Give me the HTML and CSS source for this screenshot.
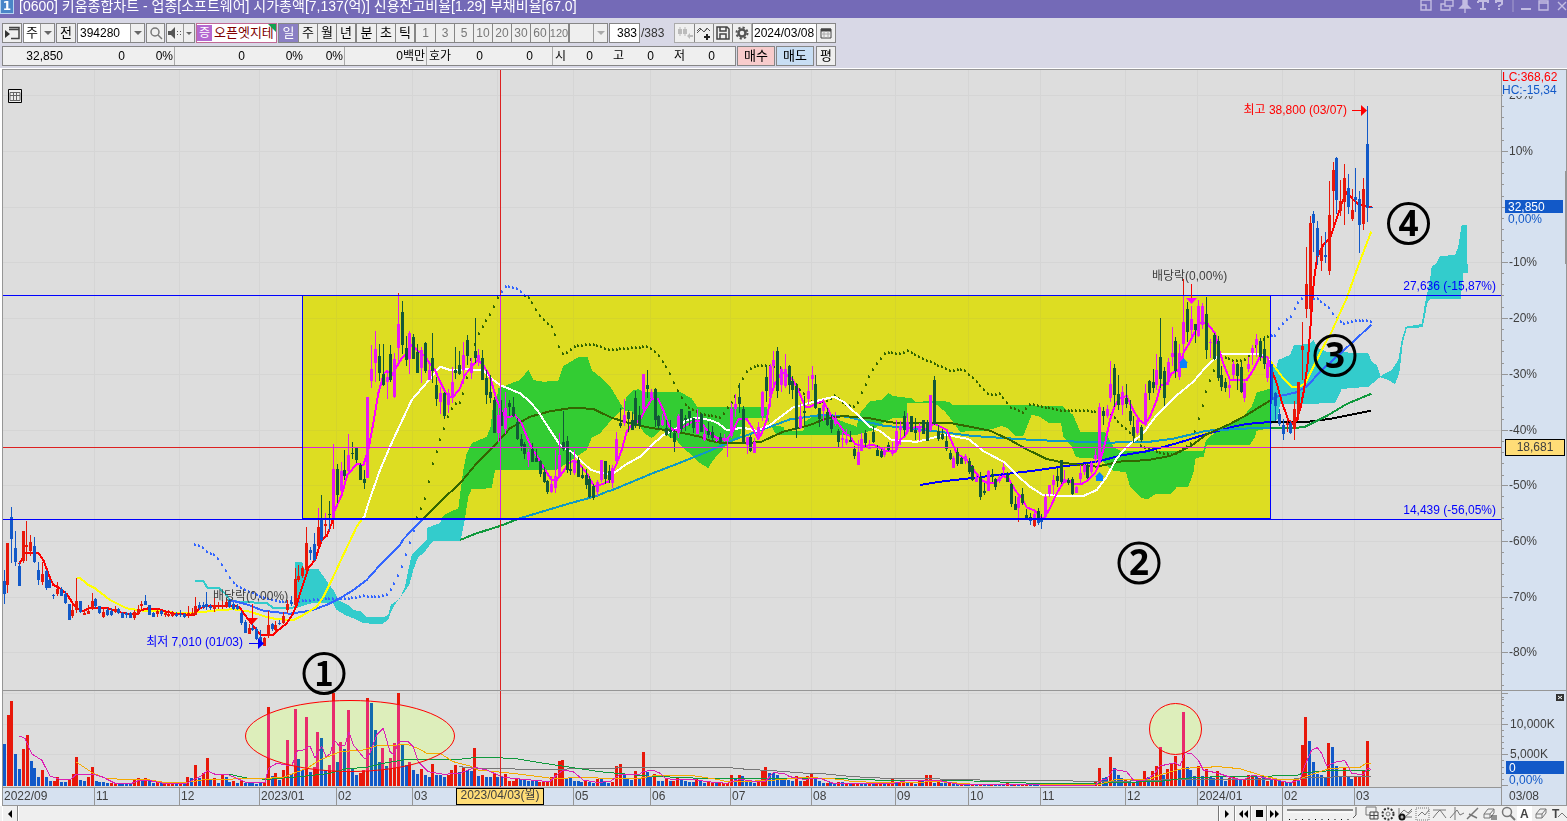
FILE: index.html
```html
<!DOCTYPE html>
<html lang="ko">
<head>
<meta charset="utf-8">
<title>[0600] 키움종합차트</title>
<link rel="stylesheet" href="styles.css">
</head>
<body>
<header class="titlebar">
  <span class="badge">1</span>
  <h1 class="title">[0600] 키움종합차트 - 업종[소프트웨어] 시가총액[7,137(억)] 신용잔고비율[1.29] 부채비율[67.0]</h1>
  <svg class="winicons" width="147" height="18" viewBox="0 0 147 18" fill="none" stroke="#c3bde2" stroke-width="1.4">
    <path d="M1 0h10v10H1zM1 5h5v5"/><path d="M25 0h8v6h-8zM25 4h-4v6h9V7"/>
    <path d="M43 0v5l-3 3h10l-3-3V0zM45 8v5" fill="#c3bde2"/><path d="M58 1h10v2M63 1v8M60 9h6M58 1v2" stroke-width="2"/>
    <path d="M76 3V1h6v3l-3 2v1M79 8v2" stroke-width="2"/><path d="M93 0v12" stroke="#9990c8"/><path d="M101 9h10" stroke-width="2"/><path d="M119 1h9v9h-9zM119 3h9"/><path d="M138 2l8 8M146 2l-8 8"/>
  </svg>
</header>

<section class="toolbar">
  <div class="row">
    <button class="btn w20" aria-label="패널"><svg width="15" height="14" viewBox="0 0 15 14"><path d="M4 1.500h10v11H6M4 3.500h10" fill="none" stroke="#444" stroke-width="1.500"/><path d="M0 4l5 4-5 4z" fill="#333"/></svg></button>
    <div class="combo w32"><button class="cval">주</button><button class="arrow" aria-label="열기"></button></div>
    <button class="btn w20">전</button>
    <div class="combo w68"><input class="code" aria-label="종목코드" value="394280"><button class="arrow" aria-label="종목 목록"></button></div>
    <button class="btn w19" aria-label="검색"><svg width="14" height="14" viewBox="0 0 14 14" fill="none" stroke="#777" stroke-width="1.500"><circle cx="6" cy="6" r="4"/><path d="M9 9l4 4"/></svg></button>
    <div class="combo w29"><button class="cval grey" aria-label="소리"><svg width="14" height="12" viewBox="0 0 14 12" fill="#555"><path d="M0 4h3l4-4v12L3 8H0zM9 4h1v1H9zM9 7h1v1H9zM12 4h1v1h-1zM12 7h1v1h-1z"/></svg></button><button class="arrow" aria-label="소리 설정"></button></div>
    <div class="stock"><span class="tag">증</span><span class="name">오픈엣지테</span></div>
    <div class="group"><button class="on">일</button><button>주</button><button>월</button><button>년</button></div>
    <div class="group"><button>분</button><button>초</button><button>틱</button></div>
    <div class="group dim"><button>1</button><button>3</button><button>5</button><button>10</button><button>20</button><button>30</button><button>60</button><button>120</button></div>
    <div class="combo w39 off"><button class="cval grey" aria-label="주기"></button><button class="arrow" aria-label="주기 목록"></button></div>
    <input class="count" aria-label="조회 개수" value="383"><span class="total">/383</span>
    <div class="group tools">
      <button aria-label="봉 추가"><svg width="16" height="14" viewBox="0 0 16 14" fill="#bbb"><path d="M1 3h4v5H1zM6 3h4v5H6zM2.500 1h1v9h-1zM7.500 1h1v9h-1zM10 10l3-3v2h3v2h-3v2z"/></svg></button>
      <button aria-label="지표 추가"><svg width="16" height="14" viewBox="0 0 16 14" fill="none" stroke="#555"><path d="M1 5l3-3 4 4 3-4 3 3M1 7l4-4 3 3 3-3"/><path d="M11 8v6M8 11h6" stroke="#222" stroke-width="2"/></svg></button>
      <button aria-label="저장"><svg width="14" height="14" viewBox="0 0 14 14" fill="none" stroke="#444" stroke-width="1.500"><path d="M1 1h10l2 2v10H1zM4 1v4h6V1M4 13V8h6v5"/></svg></button>
      <button aria-label="설정"><svg width="14" height="14" viewBox="0 0 14 14" fill="none" stroke="#555"><circle cx="7" cy="7" r="3.500" stroke-width="2.500"/><circle cx="7" cy="7" r="5.500" stroke-width="2" stroke-dasharray="2.200 2.100"/></svg></button>
    </div>
    <div class="date"><input aria-label="날짜" value="2024/03/08"><button aria-label="달력"><svg width="12" height="12" viewBox="0 0 12 12" fill="none" stroke="#444"><path d="M1 2h10v9H1z"/><path d="M1 3h10" stroke-width="3"/><path d="M4 4v7M8 4v7M1 7h10" stroke="#aaa"/></svg></button></div>
  </div>
  <div class="row">
    <div class="quote">
      <span class="q c60">32,850</span><span class="q c62">0</span><span class="q c50 end">0%</span>
      <span class="q c70">0</span><span class="q c58">0%</span><span class="q c43 end">0%</span>
      <span class="q c82 end">0백만</span>
      <span class="l c27">호가</span><span class="q c29">0</span><span class="q c50">0</span><span class="q c20 end"></span>
      <span class="l c20">시</span><span class="q c20">0</span><span class="l c40 pad">고</span><span class="q c20">0</span><span class="l c40 pad">저</span><span class="q c20">0</span>
    </div>
    <button class="btn buy">매수</button>
    <button class="btn sell">매도</button>
    <button class="btn w20 last">평</button>
  </div>
</section>

<main class="chart">
  <svg id="chart" viewBox="0 69 1567 737" role="img" aria-label="오픈엣지테 일봉 차트"></svg>
</main>

<footer class="bottom">
  <button class="sb" aria-label="이전"><svg width="6" height="8" viewBox="0 0 6 8"><path d="M5 0v8L1 4z"/></svg></button>
  <div class="track"></div>
  <button class="sb" aria-label="재생"><svg width="6" height="8" viewBox="0 0 6 8"><path d="M1 0v8l4-4z"/></svg></button>
  <button class="sb" aria-label="뒤로"><svg width="10" height="8" viewBox="0 0 10 8"><path d="M5 0v8L1 4zM10 0v8L6 4z"/></svg></button>
  <button class="sb" aria-label="정지"><svg width="7" height="7"><path d="M0 0h7v7H0z"/></svg></button>
  <button class="sb" aria-label="앞으로"><svg width="10" height="8" viewBox="0 0 10 8"><path d="M0 0v8l4-4zM5 0v8l4-4z"/></svg></button>
  <svg class="slider" width="78" height="15" viewBox="0 0 78 15"><path d="M4 4h66" stroke="#888" stroke-width="2"/><path d="M4 6h66" stroke="#fff"/><path d="M73 1v8l-3 3" stroke="#555" fill="none"/><path d="M6 13.500h64" stroke="#000" stroke-width="1" stroke-dasharray="1 5.500"/></svg>
  <svg class="tools-icons" width="206" height="15" viewBox="1361 0 206 15" fill="none" stroke="#777">
    <path d="M1366 1h10v8h-10z"/><path d="M1370 6h8v7h-8zM1374 6v7M1370 9.500h8" stroke="#444" fill="#eee"/>
    <circle cx="1388" cy="8" r="5.500" stroke="#333" stroke-dasharray="2 1.500" stroke-width="2"/><circle cx="1388" cy="8" r="2"/>
    <path d="M1399 2v9h13M1400 8l4-4 4 3 4-4M1406 10l6-5" /><circle cx="1402" cy="11" r="2.500" stroke="#111" stroke-width="2"/>
    <path d="M1416 2h13v12h-13z" stroke-dasharray="1 1"/><path d="M1418 10l4-4 3 3 4-5"/>
    <path d="M1433 4h13M1433 12l4-5 3-3 6 8"/><path d="M1455 1v13M1450 12l7-8 3 5 4-2"/><path d="M1467 13l11-11M1469 8l8 4" stroke-width="1.500"/>
    <path d="M1484 8l4-5h6l-4 5zM1484 8v4h6V8M1490 12l4-5V3"/><path d="M1492 9v5M1494 9v5M1496 9v5" stroke="#333"/>
    <circle cx="1507" cy="6" r="4.500" stroke-width="1.500"/><path d="M1510 9l5 5" stroke-width="2"/>
    <path d="M1517 0h15v15h-15z" fill="#fff" stroke="none"/>
    <text x="1520" y="12" class="tooltext">A</text>
    <path d="M1536 8l4-5h6l-4 5zM1536 8v4h6V8M1542 12l4-5V3"/>
    <text x="1552" y="12" class="tooltext">T</text><path d="M1558 11l4-4 5 5"/>
  </svg>
</footer>
<script src="chart.js"></script>
</body>
</html>
```

FILE: styles.css
```css
* { box-sizing: border-box; }
body {
  margin: 0;
  min-height: 100vh;
  display: flex;
  flex-direction: column;
  overflow: hidden;
  background: #d8d8e6;
  color: #000;
  font: 12px/16px "Liberation Sans", "Noto Sans CJK KR", sans-serif;
}
button, input { font: inherit; color: inherit; margin: 0; padding: 0; border: 0; border-radius: 0; background: none; min-width: 0; }
button { display: flex; align-items: center; justify-content: center; white-space: nowrap; font-size: 13px; }

.titlebar { height: 18px; flex: none; display: flex; align-items: flex-start; gap: 5px; background: #746ab7; color: #fff; overflow: hidden; }
.badge { width: 14px; height: 14px; background: #4a86c8; border: 1px solid #b8d4f0; border-top: 0; font: bold 12px/12px "DejaVu Sans", sans-serif; text-align: center; }
.title { margin: 0; font-size: 14px; font-weight: normal; line-height: 12px; white-space: nowrap; flex: 1; }
.winicons { flex: none; }

.toolbar { flex: none; display: flex; flex-direction: column; gap: 3px; padding: 5px 2px 2px; border-bottom: 1px solid #fff; }
.row { display: flex; gap: 1px; height: 20px; }
.btn, .combo, .stock, .group, .count, .date, .quote { flex: none; height: 20px; border: 1px solid #868686; background: #efefef; }
.w19 { width: 19px; } .w20 { width: 20px; } .w29 { width: 29px; } .w32 { width: 32px; } .w39 { width: 39px; } .w68 { width: 68px; }
.combo { display: flex; background: #fff; }
.cval { flex: 1; }
.cval.grey { background: #efefef; }
.code { flex: 1; width: 40px; padding-left: 2px; }
.arrow { width: 14px; flex: none; border-left: 1px solid #999; background: #efefef; }
.arrow::after { content: ""; border: 4px solid transparent; border-top-color: #666; border-bottom: 0; }
.off .arrow::after { border-top-color: #aaa; }
.w29 .arrow { width: 11px; }
.w29 .arrow::after { border-width: 3px 3px 0; }
.stock { width: 81px; display: flex; align-items: center; background: #fff; border-color: #c06a94; gap: 2px; position: relative; }
.stock::after { content: ""; position: absolute; top: 0; right: 0; border: 4px solid #12a050; border-left-color: transparent; border-bottom-color: transparent; }
.tag { background: #b468d0; color: #fff; width: 15px; text-align: center; flex: none; }
.name { color: #800000; white-space: nowrap; font-size: 13px; }
.group { display: flex; margin-right: -1px; }
.group button { width: 19px; border-left: 1px solid #868686; }
.group button:first-child { border-left: 0; }
.group .on { background: #8a7fc4; color: #fff; }
.dim { color: #777; }
.dim button { font-size: 12px; }
.dim button:last-child { font-size: 11px; }
.count { width: 31px; background: #fff; text-align: right; padding-right: 2px; }
.total { width: 32px; line-height: 20px; color: #333; flex: none; }
.tools { border-color: #aaa; }
.date { display: flex; width: 84px; background: #fff; }
.date input { flex: 1; width: 60px; padding-left: 1px; }
.date button { width: 19px; border-left: 1px solid #868686; background: #efefef; }
.quote { width: 734px; display: flex; align-items: stretch; line-height: 19px; }
.quote span { flex: none; white-space: nowrap; }
.q { text-align: right; }
.end { border-right: 1px solid #aaa; padding-right: 1px; }
.l { padding-left: 2px; }
.l.pad { padding-left: 20px; }
.c20 { width: 20px; } .c27 { width: 27px; } .c29 { width: 29px; } .c40 { width: 41px; } .c43 { width: 42px; } .c50 { width: 50px; }
.c58 { width: 58px; } .c60 { width: 60px; } .c62 { width: 62px; } .c70 { width: 70px; } .c82 { width: 82px; }
.buy, .sell { width: 38px; }
.buy { background: #f8cccc; }
.sell { background: #c8def4; }
.last { margin-left: 1px; }

.chart { flex: none; background: #fff; }
.chart svg { display: block; width: 100%; height: auto; }
.panel { fill: #dddddd; }
.axis { fill: #d6e1f0; }
.edge { stroke: #969696; fill: none; shape-rendering: crispEdges; }
.grid { stroke: #d5d5d5; fill: none; shape-rendering: crispEdges; }
.label { fill: #404040; font-size: 12px; }
.up { fill: #e8180a; } .down { fill: #1259c8; }
.hot .up { fill: #e82b6c; } .hot .down { fill: #126aae; }
.cloud { fill: #33cccc; }
.bars, .cloud, .line { shape-rendering: crispEdges; }
.line { fill: none; stroke-width: 2; stroke-linejoin: round; }
.thin { stroke-width: 1; }
.ma5 { stroke: #ff0000; } .ma20 { stroke: #ffff00; } .ma60 { stroke: #3366ff; } .ma120 { stroke: #0f993c; } .ma240 { stroke: #000; }
.lead { stroke: #33cccc; }
.dots { fill: #3366ff; shape-rendering: crispEdges; }
.v5 { stroke: #dc1eb4; } .v20 { stroke: #f5aa00; } .v60 { stroke: #0f993c; } .v120 { stroke: #777; }
.cross { stroke: #dc2020; shape-rendering: crispEdges; }
.zone { fill: #0000ff; mix-blend-mode: difference; }
.rule { stroke: #0000ff; fill: none; shape-rendering: crispEdges; }
.bluetext { fill: #0000ff; } .redtext { fill: #ff0000; } .quotetext { fill: #1259c8; } .white { fill: #fff; }
.halo { fill: #ddeebb; } .ring { fill: none; stroke: #ff0000; }
.box { fill: #ffdd77; stroke: #000; }
.num { font: bold 35px "Noto Sans", "Open Sans", sans-serif; text-anchor: middle; }
.num.serifed { font-family: "Noto Sans CJK KR", sans-serif; font-size: 33px; }
.numring { fill: none; stroke: #000; stroke-width: 3; }
.magenta { fill: #ff00ff; } .sky { fill: #0a80ff; }
.right { text-anchor: end; } .mid { text-anchor: middle; }

.bottom { height: 15px; flex: none; display: flex; background: #f0f0f0; padding-left: 2px; overflow: hidden; }
.sb { width: 16px; flex: none; border-right: 1px solid #888; border-left: 1px solid #fff; }
.track { flex: 1; background: #efefef; border-right: 1px solid #777; border-left: 1px solid #fff; }
.slider, .tools-icons { flex: none; }
.tooltext { font: bold 12px "Liberation Sans", sans-serif; fill: #444; stroke: none; }
```

FILE: chart.js
```js
// Series are grouped by tile: each tile has an origin in px, and its numbers are thirds of a px.
const nums = s => s.trim().split(/[\s,]+/).map(Number);
const pts = tiles => tiles.flatMap(([ox, oy, s]) => {
  const n = nums(s), out = [];
  for (let i = 0; i < n.length; i += 2) out.push([ox + n[i] / 3, oy + n[i + 1] / 3]);
  return out;
});
const fmt = p => p.map(([x, y]) => x.toFixed(1) + ',' + y.toFixed(1)).join(' ');
let svg = '';
const add = s => { svg += s; };
const text = (x, y, s, c = 'label') => add(`<text x="${x}" y="${y}" class="${c}">${s}</text>`);

// x high top bottom low colour
const candles = [
[0, 490, `13 240 273 312 342 b|22 158 158 285 308 r|34 51 81 147 219 b|46 123 174 216 228 b|58 216 228 288 288 b|70 123 123 213 219 r|79 93 165 171 213 r|91 135 156 183 198 r|103 141 168 216 219 b|115 216 240 270 285 b|127 216 252 276 285 r|139 240 243 294 300 b|148 267 270 294 294 b|160 312 315 319 327 b|172 276 297 312 318 r|184 291 297 318 318 b|196 303 312 339 342 b|208 342 342 390 390 b|217 345 360 378 384 r|229 264 333 360 369 r|241 333 333 366 369 b|253 360 369 374 375 r|265 345 363 372 372 r|277 309 333 357 360 r|286 324 327 348 354 b|298 348 348 369 372 b|310 357 366 381 384 r|322 354 360 375 378 b|334 354 363 375 378 b|346 348 358 366 369 r|355 354 357 369 372 b|367 366 370 384 384 b|379 366 370 375 384 b|391 366 370 384 384 b|403 360 366 384 390 r|415 345 357 372 375 r|424 333 342 348 360 r|436 315 333 345 345 b|448 345 345 375 375 b|460 366 370 381 381 b|472 354 363 372 381 r|484 360 363 372 378 b|496 363 369 375 381 r|505 360 372 379 381 r|517 363 370 378 381 r|529 366 372 379 381 b|541 360 372 375 381 b|553 369 372 381 384 b|565 348 368 376 384 r|577 354 368 376 378 r|586 321 348 375 375 r|598 336 346 354 360 b|610 336 346 351 357 b|619 306 342 351 360 b|631 342 349 354 361 b|643 325 345 357 366 r|655 336 344 350 358 r|667 330 345 351 357 r|679 327 336 348 354 r|688 327 333 352 354 b|700 336 342 358 361 b|712 342 348 358 360 b|724 364 369 399 405 b|736 390 396 429 429 b|748 403 413 432 432 r|757 400 415 421 424 b|769 412 416 447 450 b|781 420 440 462 468 b|793 441 444 468 468 r|805 362 405 438 444 r|817 399 402 417 424 b|826 394 405 421 430 r|838 390 398 403 405 b|850 366 378 399 402 r|862 330 343 360 368 r|874 318 336 342 348 b|886 234 267 345 345 r|895 225 258 270 276 r|907 228 234 258 264 r|919 111 158 240 250 r|931 171 180 189 210 b|943 129 162 210 213 b|955 54 111 168 171 r|964 15 87 150 156 b|976 69 102 108 142 r|988 33 72 76 123 b`],
[290, 270, `130 522 597 747 777 r|142 582 597 675 699 b|154 576 603 663 669 r|163 540 600 618 630 b|175 492 555 603 615 r|187 516 549 553 567 b|199 533 533 570 579 b|211 580 585 630 630 b|223 600 627 639 657 b|232 381 381 624 624 r|244 225 297 333 354 r|256 183 237 279 336 r|268 222 258 309 333 b|280 222 312 345 348 b|292 303 321 336 387 r|301 225 252 330 336 b|313 249 267 381 384 r|325 69 162 234 282 r|337 93 126 225 252 b|349 198 234 270 288 b|358 183 189 267 312 r|370 192 201 267 267 b|382 222 246 309 309 b|394 231 240 294 339 r|406 216 219 303 309 b|418 273 300 330 330 r|427 189 264 303 339 b|439 321 345 387 408 b|451 351 369 396 432 r|463 366 369 438 447 b|475 357 369 405 429 r|487 291 336 381 399 r|496 231 300 309 327 b|508 243 285 312 315 b|520 216 255 300 342 r|532 195 210 258 285 b|544 264 279 309 327 r|556 144 243 264 279 b|565 237 255 276 288 r|577 240 264 330 330 b|589 300 324 375 402 b|601 315 366 384 399 b|613 381 390 489 489 b|625 405 435 489 516 r|634 390 426 468 468 b|646 366 414 477 492 r|658 390 399 411 438 b|670 381 411 438 440 b|682 444 456 507 510 b|694 492 507 528 543 b|703 516 522 552 567 b|715 537 546 570 591 r|727 519 537 576 576 b|739 537 564 576 576 b|751 570 573 612 621 b|763 591 606 636 639 b|772 630 633 666 672 b|784 618 642 666 669 r|796 540 618 654 669 r|808 489 555 618 624 r|820 423 516 537 543 b|832 498 513 600 609 b|841 546 597 603 615 b|853 540 570 609 615 r|865 561 570 621 621 b|877 591 615 624 627 b|889 597 615 645 657 b|898 618 627 681 684 b|910 642 648 684 690 b|922 630 636 666 678 r|934 570 570 630 636 r|946 573 573 627 642 b|958 585 603 630 639 b|967 585 594 639 654 r|979 486 507 573 579 r`],
[610, 330, `31 234 279 288 294 b|43 207 255 279 288 r|55 240 246 267 306 b|67 246 270 300 300 b|76 183 204 285 294 b|88 228 255 288 297 b|100 132 132 237 243 r|112 120 165 177 204 b|124 177 186 204 213 r|136 174 177 270 291 b|145 255 258 288 297 b|157 252 270 285 288 r|169 270 294 315 318 b|181 270 300 306 324 b|193 300 309 336 366 b|205 252 258 309 324 r|214 237 237 297 306 b|226 255 264 270 303 b|238 243 243 264 288 b|250 264 264 294 309 b|262 237 279 312 312 r|274 249 252 306 306 b|283 288 312 330 333 r|295 276 303 315 324 b|307 288 306 324 333 b|319 318 330 333 336 r|331 309 321 336 339 b|343 312 327 333 336 r|352 321 324 333 381 r|364 219 237 318 324 r|376 192 222 237 261 r|388 158 201 222 249 b|400 228 237 336 342 b|412 321 321 345 372 r|421 315 321 363 366 b|433 324 336 369 369 r|445 276 291 318 327 r|457 183 186 258 273 r|469 105 141 183 216 b|481 102 108 201 231 r|490 63 90 108 171 r|502 51 63 183 204 b|514 111 117 165 186 r|526 72 117 168 174 r|538 105 108 165 192 b|547 138 153 180 207 b|559 159 168 297 324 b|571 219 258 294 297 r|583 198 243 249 285 b|595 138 183 207 225 r|607 108 135 147 180 r|616 135 162 234 237 b|628 234 234 267 291 b|640 207 225 243 273 r|652 234 246 285 288 b|664 255 270 297 309 b|676 246 264 282 288 r|685 297 303 336 351 b|697 306 324 330 354 r|709 297 326 339 345 r|721 303 330 336 336 b|733 348 357 378 387 b|745 330 366 405 405 r|754 309 327 363 363 r|766 300 309 339 354 b|778 330 353 356 357 r|790 288 307 336 340 b|802 345 360 378 378 b|814 358 363 381 384 b|823 354 360 375 381 r|835 336 345 360 363 b|847 336 360 372 378 r|859 270 303 360 366 r|871 273 288 300 345 r|883 243 258 300 318 b|892 249 276 306 312 r|904 258 258 306 306 b|916 264 300 309 330 b|928 279 288 306 333 r|940 270 270 312 312 b|952 270 276 333 333 b|961 195 195 300 303 r|973 138 150 282 285 b|985 285 303 327 333 b|997 297 312 327 330 b|1009 312 333 357 363 b`],
[900, 260, `151 570 579 597 600 b|160 588 594 624 624 r|172 561 576 612 618 b|184 591 594 612 612 b|196 582 588 603 612 r|208 594 603 636 642 b|217 615 618 660 663 b|229 642 651 666 666 r|241 636 651 711 720 b|253 669 693 699 705 b|265 630 633 693 693 r|277 627 642 651 666 b|286 654 657 681 690 b|298 645 651 663 669 r|310 609 621 630 642 r|322 636 645 666 666 b|334 669 672 732 741 b|346 708 732 750 750 b|355 708 711 744 786 r|367 684 702 729 735 b|379 747 765 777 780 b|391 759 772 783 795 b|403 750 762 798 801 r|415 744 753 789 795 b|424 762 780 786 807 b|436 702 711 771 774 r|448 675 675 702 711 r|460 645 660 675 705 r|472 624 648 663 681 b|484 600 600 666 672 b|493 630 657 666 666 r|505 654 660 669 675 b|517 651 657 702 705 b|529 678 681 699 699 r|541 615 639 657 672 r|553 612 615 636 645 r|562 609 615 654 657 b|574 603 609 636 642 r|586 567 585 597 609 r|598 429 441 609 612 r|610 441 453 468 495 b|622 435 447 468 474 r|631 303 372 414 426 r|643 312 324 405 441 b|655 345 402 435 450 b|667 378 396 435 465 r|679 372 414 432 444 b|691 420 453 483 495 b|700 468 501 528 549 b|712 477 480 519 525 r|724 495 501 540 546 b|736 372 399 495 498 r|748 360 363 399 420 b|760 327 366 384 399 b|769 282 330 375 390 r|781 174 291 357 384 b|793 321 333 414 438 b|805 294 306 366 375 r|817 201 279 291 318 r|826 231 243 333 354 b|838 252 279 351 360 r|850 57 186 252 300 r|862 126 147 216 246 b|874 138 177 210 237 r|886 192 192 210 249 b|895 120 138 228 231 r|907 129 138 195 207 r|919 111 162 270 297 b|931 237 246 249 294 r|943 219 225 297 300 b|955 228 243 354 363 b|964 318 345 381 393 b|976 354 366 384 396 b|988 360 375 384 414 r|1000 303 312 345 357 r|1012 309 312 348 390 b|1024 306 321 396 399 b|1033 360 369 414 426 r|1045 291 312 327 336 r|1057 255 264 279 315 r|1069 222 237 255 291 r`],
[1180, 220, `241 354 363 411 423 b|253 348 387 432 447 b|262 408 429 474 486 r|274 432 432 540 552 b|286 516 519 558 603 b|298 567 582 612 618 b|310 597 615 642 660 b|322 594 610 616 636 r|331 603 609 639 642 b|343 543 567 627 660 r|355 486 486 582 600 r|367 306 378 390 480 r|379 81 192 267 294 r`],
[1230, 0, `241 648 669 927 945 r|250 633 642 669 756 b|262 663 684 768 795 b|274 708 747 783 813 r|286 696 765 770 790 b|298 543 645 813 825 r|310 486 510 573 675 r|319 471 474 600 642 b|331 540 603 633 648 r|343 492 534 606 675 r|355 522 564 621 642 b|367 567 630 657 663 r|376 504 591 600 636 b|388 573 597 675 759 b|400 534 567 672 690 r|412 318 432 623 666 b|424 621 621 624 624 b`]];

const ma5 = [[0,490,'58 222 76 188 115 188 130 210 148 258 160 285 178 294 200 312 220 342 235 357 250 363 270 354 320 354 350 362 370 370 410 372 425 360 445 355 475 357 500 365 530 373 582 374 600 355 620 348 712 348 720 354 735 375 750 395 765 415 782 435 818 435 835 420 860 400 878 372 890 345 900 310 912 275 925 235 945 210 955 180 965 150 980 138 995 100'],
[290,270,'130 730 155 675 172 615 185 600 200 582 220 585 235 540 250 460 265 370 282 310 292 303 305 315 320 290 335 265 350 250 365 225 380 240 405 258 415 275 435 300 450 335 465 365 480 380 490 380 510 355 525 315 545 290 565 270 580 285 600 320 620 390 632 415 645 440 655 442 675 436 695 460 710 500 725 535 745 565 765 600 785 630 800 630 820 605 835 580 850 573 865 578 890 610 912 648 930 645 955 635 965 620'],
[610,330,'7 430 20 400 35 360 50 305 65 285 90 270 105 240 125 208 145 208 160 240 178 290 190 300 205 300 230 285 250 273 270 273 290 300 310 318 330 328 350 328 365 310 385 268 410 267 425 290 445 327 455 310 470 270 482 200 495 160 510 135 520 128 545 145 560 170 575 205 585 230 600 230 620 220 640 213 655 240 665 260 685 280 705 310 720 318 735 342 760 348 790 345 805 350 825 362 855 365 870 330 885 318 895 295 930 290 955 300 965 285'],
[900,260,'105 492 140 510 155 545 170 580 200 600 225 635 245 660 265 670 285 668 310 648 325 655 345 690 365 715 380 742 405 752 420 772 432 774 450 745 470 700 490 668 505 660 520 672 545 672 565 660 585 640 600 605 615 550 630 480 645 435 660 415 680 408 690 430 705 460 720 482 735 492 750 470 770 420 782 375 800 372 815 340 835 330 850 280 870 245 885 215 900 190 922 190 945 220 955 260 970 310 990 360 1040 360 1060 330'],
[1180,220,'240 410 262 410 275 450 290 490 305 545 325 600 340 612 350 600 362 560 372 510 382 440 390 340 397 240 402 180 412 110 430 75 447 55'],[1230,0,'302 710 320 655 335 610 350 575 365 595 385 612 400 617 425 621']];
const ma20 = [[0,490,'230 264 240 264 265 285 285 295 330 330 380 355 430 362 480 363 540 370 600 367 660 360 700 358 750 365 790 378 830 388 880 390 910 375 950 350 970 320 1000 260 1030 195 1070 110 1090 82'],
[290,270,'222 745 235 700 270 600 300 530 330 465 365 390 400 350 430 315 450 290 480 300 530 298 580 302 610 330 630 345 690 370 720 395 745 425 780 480 810 525 850 550 900 598 925 607 955 612'],
[610,330,'0 438 45 405 90 380 120 350 160 315 200 295 230 270 260 263 300 270 325 280 350 300 400 293 440 303 480 285 510 262 550 232 600 218 640 208 672 200 700 215 740 252 780 290 810 303 845 330 865 333'],
[900,260,'0 543 50 545 100 533 140 525 205 537 250 573 310 605 350 645 390 680 430 706 550 708 590 690 620 650 650 595 680 560 730 520 770 465 820 415 880 365 920 318 960 283'],
[1180,220,'120 402 235 402 262 412 280 435 310 475 335 500 355 502 375 490 400 440 430 380 455 335 475 290 500 235 530 150 560 70 574 35']];
const ma60 = [[0,490,'688 330 740 343 790 362 870 371 930 362 980 345 1020 325 1060 300 1100 270 1140 225 1200 165'],
[290,270,'340 808 395 750 450 695 510 640 560 580 610 530 660 475 720 440 780 424 850 413 910 417 960 441'],
[610,330,'0 262 70 283 130 295 190 303 270 320 300 332 340 340 450 337 520 305 600 285 650 265 700 258 780 265 840 277 870 279'],
[900,260,'0 489 150 489 210 500 270 512 330 540 380 568 440 597 500 610 590 620 670 603 740 601 810 588 870 560 920 523 990 492 1040 465 1080 440'],
[1180,220,'290 530 345 518 380 500 420 455 470 410 520 365 574 314']];
const ma120 = [[290,270,'510 810 560 790 630 768 690 745 750 727 840 700 920 678 955 663'],[610,330,'0 483 120 433 210 398 300 362 370 330 440 305 540 268 640 254 710 260 820 287 870 292'],
[900,260,'0 500 90 512 220 528 400 540 620 548 750 545 820 536 920 512 1000 508 1080 503'],[1180,220,'240 624 345 624 375 620 440 588 500 552 574 521']];
const ma240 = [[900,260,'60 675 120 665 250 650 400 632 520 615 600 603 660 587 740 574 830 550 920 522 1000 500'],[1180,220,'200 612 280 605 380 606 460 595 520 583 574 572']];
const lead = [[0,490,'586 272 610 272 622 293 655 293 675 310 690 330 720 337 800 338 820 355 870 355 890 350']];
const dotted = [[0,490,'583 162 598 165 620 185 645 192 660 215 680 250 690 268 710 285 735 298 765 312 800 325 840 333 890 333 950 326 1060 322 1085 316 1130 318 1160 310 1180 280 1200 240'],
[290,270,'380 740 405 678 425 580 450 503 475 428 490 400 508 397 520 360 545 245 560 195 580 160 600 130 625 72 645 46 680 53 700 75 715 82 750 140 785 172 800 210 810 248 825 247 850 228 905 220 955 238'],
[610,330,'0 58 110 48 135 65 170 112 195 170 225 225 270 250 330 260 350 232 375 195 390 155 410 118 445 103 480 108 510 110 545 148 580 190 610 222 650 210 675 193 700 222 735 230 755 180 780 128 800 97 825 65 868 70'],
[900,260,'0 280 22 270 80 300 150 330 185 325 220 355 265 402 300 400 330 440 365 455 390 430 480 450 590 452 640 470 690 520 720 555 780 577 820 583 870 550 895 470 920 380 945 315 970 288 1000 300 1030 300 1055 270 1070 252'],
[1180,220,'240 362 262 346 285 345 300 313 330 288 345 255 365 232 410 233 445 262 470 300 490 310 520 300 576 302']];

const clouds = [
[[0,490,'886 216 907 216 912 237 955 237 985 280 1000 300 1015 330 1045 345 1060 360 1085 365 1100 381 1150 381 1165 375 1172 345 1200 325 1215 290 1225 240 1235 195 1250 180 1281 150 1281 113'],
 [290,270,'450 760 455 745 465 733 505 715 512 660 520 600 530 550 545 520 590 500 602 470 610 400 622 375 625 355 690 330 715 300 730 330 760 335 805 333 820 288 865 262 893 262 905 300 935 325 960 348 985 390 1000 415 960 455 930 490 905 503 890 540 830 580 800 600 615 600 605 655 545 657 535 680 525 745 512 812 430 812'],
 [0,490,'1270 190 1255 200 1240 240 1228 285 1210 310 1190 335 1175 360 1165 390 1145 402 1090 400 1060 385 1035 375 1010 360 1000 340 940 338 886 355']],
[[610,330,'40 235 50 200 70 180 85 178 100 186 210 186 245 205 262 232 470 232 478 280 490 288 520 290 525 303 580 303 585 275 605 262 650 255 700 275 740 290 750 250 780 213 815 210 835 190 850 198 905 205 915 215 1000 213 1018 217 1028 225'],
 [900,260,'160 435 485 437 520 465 540 515 615 515 640 560 660 572 910 573 918 540 960 505 1020 480 1055 440 1070 398 1112 385'],
 [1180,220,'272 440 290 440 295 420 330 405 342 375 390 372 400 360 415 385 440 395 565 400 575 425 590 435 602 468 635 450 655 420 665 360 677 320 725 312 735 250 750 180 755 140 770 130 780 108 825 105 835 80 845 15 860 15 863 158 850 160 842 237 750 237 742 250 728 322 680 325 668 370 658 460 645 492 620 478 600 472 565 500 485 507 465 550 300 552 292 600 272 612 270 625 230 632 225 650 210 675 80 675'],
 [900,260,'910 592 887 593 880 640 865 680 830 682 810 703 765 703 745 717 725 715 690 680 678 636 640 633 600 597 528 592 515 560 490 530 483 490 445 488 415 468 395 465 370 528 345 528 325 505 305 498 260 512 180 515 160 487 135 455 105 430 20 430'],
 [610,330,'890 264 850 264 810 283 790 300 740 315 500 315 478 280 470 264 400 264 390 320 345 350 310 390 295 414 265 396 250 380 210 345 200 330 180 322 155 298 140 312 125 324 105 312 90 290 65 243 45 242']]];

// Volume heights in thirds of a px, spread evenly from the first x to the last.
const volumes = [
[4.3, 398.3, '126b 213r 255r 96b 51b 111r 153r 75b 54b 27b 48r 27b 15b 15r 27r 12b 12b 21r 36r 87r 18b 15b 27r 57r 15b 12b 12b 9b 10r 10r 8b 6b 6b 7b 18r 24r 18b 24r 18b 10b 12r 8b 8r 8r 8r 6b 9r 9b 27r 24b 63r 24b 39r 84r 18b 24r 9b 36r 27b 12b 15r 10b 15r 10b 10b 8b 6b 9b 12r 237r 30b 39r 18b 48r 138r 36b 231r 81b 48b 207r 42b 57r 162r 144b 48b 63r 280r 72b 132r 111b 228r 54b 33b 39r 48r 264r 249b 168b 72b 114r 60b 84r 129r 280r'],
[402.3, 639.3, '123b 63b 72r 48b 36b 51r 33b 27b 66r 33b 33b 27b 33r 48r 63r 42b 57r 48b 45b 114r 30b 33r 27b 27b 36r 27b 27b 36r 15r 15r 24r 21b 18b 15b 15b 15b 12r 12r 12r 27r 39r 75r 78r 24b 24b 15b 15b 12b 15r 12b 9b 21r 21b 12b 9b 12r 60r 66r 33b 24b 18b 45r 24b'],
[643.3, 957.3, '102r 42b 27b 36r 15b 15b 21r 15b 15r 27r 21b 15b 12b 12b 21r 15b 9b 12r 9r 9b 9r 9r 9r 33r 21b 33r 30b 12b 15b 9b 15r 45r 57r 39b 39b 33b 24b 24b 18b 15b 30r 15b 15r 30r 36r 24b 15b 9b 9r 12b 9b 12r 12b 9r 9b 7r 9r 8b 8b 9r 7b 6r 8r 6b 8r 20r 12b 12r 15r 9b 12r 6b 15r 15b 33r 33r 9b 15r 9b 15b 9r 7b 6b'],
[961.3, 1095.3, '6r 4b 6b 4r 6b 5r 3b 5b 4r 6b 4b 4b 9r 4b 4r 4b 3r 6r 4b 5b 3b 4r 4r 6b 4r 5b 3b 6r 5r 4b 3b 5r 6b 4b 5r 15r'],
[1099.3, 1129.3, '54r 24b 27b 87r 54b 33b 24b 18r 15b'],
[1133.3, 1367.3, '12r 18b 12r 45r 27b 45r 60r 117r 33b 51r 69r 90r 51b 222r 57b 48b 30b 60r 30b 51r 27b 24b 45r 27b 15b 24r 27r 18b 18b 21r 33r 33r 27b 24r 30b 15r 21b 18r 15b 15r 12b 12b 21r 15b 123r 207r 135b 72b 36b 33b 27b 129r 117b 60b 27b 54r 27b 21b 30r 27r 45r 135r']];
const v5 = [[0,490,'58 738 75 745 95 792 125 810 150 858 180 868 210 870 230 852 280 852 310 862 345 880 390 882 420 870 450 872 490 880 560 880 600 860 622 842 650 855 680 852 710 865 740 878'],[240,680,'75 308 85 265 110 250 155 258 172 213 190 210 210 198 225 235 245 198 258 230 270 222 283 180 300 200 315 195 327 155 340 195 375 238 390 220 410 165 430 145 450 215 462 225 475 185 505 185 520 200 535 245 565 275 610 283 660 280 705 262 740 270 790 292 850 298 930 305 950 285 970 270 1000 275 1030 300 1070 307 1110 305 1140 283 1195 285'],[640,730,'10 125 40 120 60 130 75 145 110 150 160 148 200 155 260 160 300 148 350 155 375 155 400 128 430 130 450 140 490 148 540 145 580 160 760 160 800 152 900 152 950 162 1100 162 1200 165 1366 165 1385 150 1400 148 1420 118 1460 125'],[1130,680,'10 300 45 300 70 285 90 258 135 248 150 258 165 218 185 222 205 240 220 270 265 280 310 295 340 300 370 285 410 295 480 308 510 300 525 255 545 210 562 203 575 220 590 258 620 245 645 242 665 280 700 285 712 265 722 268']];
const v20 = [[0,490,'229 816 250 830 280 850 320 866 450 870 500 878 570 876 620 868 780 866'],[240,680,'130 292 200 265 240 240 300 215 370 210 410 197 450 198 500 192 540 208 560 220 600 220 640 245 690 258 715 270 800 278 900 290 940 296 1030 292 1120 296'],[640,730,'0 145 40 137 160 137 230 148 260 155 380 152 500 142 600 148 640 155 760 158 900 155 1000 163 1380 163 1430 148'],[1130,680,'0 300 60 297 90 285 160 265 265 260 330 266 390 285 440 297 500 300 540 285 600 265 690 262 705 252 722 250']];
const v60 = [[0,490,'688 853 740 864 800 868'],[240,680,'180 290 270 280 320 266 380 262 440 248 500 238 660 238 710 232 820 235 900 248 980 260 1080 275 1195 286'],[640,730,'0 137 180 145 600 146 760 152 1000 153 1180 160 1370 160'],[1130,680,'0 307 100 303 160 295 260 290 500 287 520 278 600 272 722 270']];
const v120 = [[240,680,'658 260 720 266 930 268 1100 265 1195 262'],[640,730,'0 112 255 112 320 118 400 122 500 130 550 131 640 140 760 146 900 147 1100 152 1300 153'],[1130,680,'0 303 160 298 480 298 560 292 722 289']];

const months = [[4,'2022/09'],[96,'11'],[181,'12'],[261,'2023/01'],[338,'02'],[414,'03'],[575,'05'],[652,'06'],[732,'07'],[813,'08'],[897,'09'],[970,'10'],[1042,'11'],[1127,'12'],[1199,'2024/01'],[1284,'02'],[1356,'03']];
const levels = [[95,'20%'],[151,'10%'],[207,''],[262,'-10%'],[318,'-20%'],[374,'-30%'],[430,'-40%'],[485,'-50%'],[541,'-60%'],[597,'-70%'],[652,'-80%']];

// Panels and grid
add('<rect class="panel" x="3" y="70" width="1498" height="717"/><rect class="axis" x="1502" y="70" width="64" height="735"/><rect class="axis" x="3" y="788" width="1563" height="17"/>');
let g = '';
months.slice(1).map(m => m[0] - 2).concat(497).forEach(x => { g += `M${x}.5 70V787`; });
levels.map(l => l[0]).concat(693, 724, 754).forEach(y => { g += `M3 ${y}.5H1501`; });
add(`<path class="grid" d="${g}"/>`);

clouds.forEach(c => add(`<polygon class="cloud" points="${fmt(pts(c))}"/>`));
const line = (t, c) => add(`<polyline class="line ${c}" points="${fmt(pts(t))}"/>`);
line(lead, 'lead');
let d = '';
const dp = pts(dotted);
for (let i = 0, x = dp[0][0]; x < dp[dp.length - 1][0]; x += 3.83) {
  while (dp[i + 1][0] < x) i++;
  const [a, b] = [dp[i], dp[i + 1]];
  const y = a[1] + (b[1] - a[1]) * (x - a[0]) / (b[0] - a[0]);
  d += `M${Math.round(x)} ${Math.round(y - 1)}h1v1h1v2h-2z`;
}
add(`<path class="dots" d="${d}"/>`);
line(ma240, 'ma240'); line(ma120, 'ma120'); line(ma60, 'ma60'); line(ma20, 'ma20'); line(ma5, 'ma5');

const paths = { r: '', b: '' };
candles.forEach(([ox, oy, rows]) => rows.split('|').forEach(r => {
  const f = r.split(' '), c = f[5];
  const x = Math.floor(ox + f[0] / 3), [h, t, b, l] = f.slice(1, 5).map(v => Math.round(oy + v / 3));
  paths[c] += `M${x} ${h}h1V${Math.max(l, h + 1)}h-1zM${x - 1} ${t}h3V${Math.max(b, t + 1)}h-3z`;
}));
add(`<g class="bars"><path class="up" d="${paths.r}"/><path class="down" d="${paths.b}"/></g>`);

// Volume panel, with its own tint inside the two ovals
const v = { r: '', b: '' };
volumes.forEach(([from, to, s]) => {
  const list = s.split(' '), step = (to - from) / (list.length - 1);
  list.forEach((q, i) => {
    const x = Math.floor(from + i * step) - 1, h = Math.max(1, Math.round(parseInt(q) / 3));
    v[q.slice(-1)] += `M${x} 786v${-h}h3v${h}z`;
  });
});
const vol = `<path class="up" d="${v.r}"/><path class="down" d="${v.b}"/>`;
const ovals = c => `<ellipse class="${c}" cx="350" cy="736" rx="104.500" ry="35.500"/><ellipse class="${c}" cx="1175.500" cy="729" rx="26" ry="25.500"/>`;
add(`<clipPath id="ovals">${ovals('')}</clipPath><g class="bars">${vol}</g>${ovals('halo')}<g class="bars hot" clip-path="url(#ovals)">${vol}</g>`);
line(v120, 'v120 thin'); line(v60, 'v60 thin'); line(v20, 'v20 thin'); line(v5, 'v5 thin');
add(ovals('ring'));

add('<path class="cross" d="M500.5 70V787M3 447.500H1501"/>');
add('<rect class="zone" x="303" y="296" width="967" height="222"/>');
add('<path class="rule" d="M3 295.500H1501M3 519.500H1501M302.500 295V519M1270.500 295V519M303 518.500H1270"/>');

// Frame, ticks and axis labels
let t = '';
levels.forEach(([y]) => { t += `M1502 ${y}.5h6`; for (let k = 1; k < 5; k++) t += `M1502 ${Math.round(y + k * 11.15)}.5h2`; });
for (let k = 0; k <= 15; k++) t += `M1502 ${Math.round(693 + k * 6.13)}.5h${k % 5 ? 2 : 6}`;
months.slice(1).forEach(m => { t += `M${m[0] - 2}.5 788V805`; });
add(`<path class="edge" d="M2.500 806V69.500H1567M3 690.500H1566M3 787.500H1501M3 805.500H1567M1501.500 70V805M1566.500 70V805M1565.500 171V264${t}"/>`);
levels.forEach(([y, s]) => s && text(1509, y + 4, s));
add('<rect class="axis" x="1503" y="72" width="62" height="24"/>');
text(1502, 81, 'LC:368,62', 'label redtext'); text(1502, 94, 'HC:-15,34', 'label quotetext');
add('<rect class="down" x="1505" y="200" width="58" height="13"/><rect class="down" x="1506" y="761" width="58" height="13"/>');
text(1508, 211, '32,850', 'label white'); text(1508, 223, '0,00%', 'label quotetext');
text(1509, 772, '0', 'label white'); text(1509, 784, '0,00%', 'label quotetext');
text(1510, 728, '10,000K'); text(1510, 758, '5,000K'); text(1509, 800, '03/08');
add('<rect class="box" x="1505.500" y="439.500" width="59" height="16"/>'); text(1535, 451, '18,681', 'label mid');
add('<rect x="1556" y="694" width="8" height="7" fill="#333"/><path d="M1558 696l4 3M1562 696l-4 3" stroke="#fff"/>');
months.forEach(([x, s]) => text(x, 800, s));
add('<rect class="box" x="456.500" y="788.500" width="87" height="16"/>'); text(500, 799, '2023/04/03(월)', 'label mid');

// Annotations
text(1496, 290, '27,636 (-15,87%)', 'label bluetext right'); text(1496, 514, '14,439 (-56,05%)', 'label bluetext right');
text(1347, 114, '최고 38,800 (03/07)', 'label redtext right'); text(243, 646, '최저 7,010 (01/03)', 'label bluetext right');
add('<path class="redtext" d="M1352 110h9v-5l6 5.500-6 5.500v-5h-9z"/><path class="bluetext" d="M249 643h9v-5l6 5.500-6 5.500v-5h-9z"/>');
text(213, 600, '배당락(0,00%)'); text(1152, 280, '배당락(0,00%)');
add('<path class="redtext" d="M252 604h1v14h5l-5.500 6-6.500-6h6z"/><path class="redtext" d="M1191 284h1v14h-1z"/><path class="magenta" d="M1186 298h11l-5.500 6z"/>');
add('<path class="sky" d="M1183.500 358l4.500 5h-1v5h-7v-5h-1zM1099.500 472l4.500 5h-1v4h-7v-4h-1z"/>');
add('<path d="M8.500 89.500h13v13h-13z" fill="#eee" stroke="#000"/><path d="M10 92.500h10v8h-10zM10 95.500h10M13.500 92v9M16.500 92v9" fill="none" stroke="#666"/>');
[[324,673.5],[1139,563],[1335,355.5],[1408.5,223.5]].forEach(([x, y], i) => {
  add(`<circle class="numring" cx="${x}" cy="${y}" r="20"/>`); text(x, y + 12, i + 1, i ? 'num' : 'num serifed');
});
document.getElementById('chart').innerHTML = svg;
```
